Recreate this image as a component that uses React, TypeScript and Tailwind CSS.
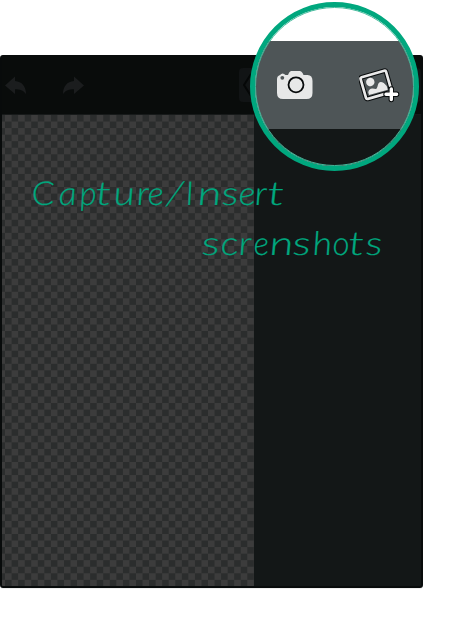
import React from "react";

function Arrow({ flip = false }: { flip?: boolean }) {
  return (
    <svg viewBox="0 0 22 20" className={flip ? "h-5 w-[22px] -scale-x-100" : "h-5 w-[22px]"}>
      <path d="M0 10.500 10 1.500v4.500c7 .5 11 5.500 11 13-3-4-6-4.800-11-4.800V19z" fill="#1b1d1e" />
    </svg>
  );
}

function Camera() {
  return (
    <svg viewBox="0 0 36 30" className="h-[30px] w-9">
      <path d="M3 5q2.500-3 5.500 0h2.500q1.500-4 3.500-4h8q2.500 0 4 4h4q5 0 5 6v12q0 6-6 6H6q-6 0-6-6V9q0-3 3-4z" fill="#e7e8e8" />
      <circle cx="5.300" cy="7.800" r="1.900" fill="#4e5557" />
      <circle cx="19" cy="14.800" r="7.500" fill="none" stroke="#080b0c" strokeWidth="1.800" />
    </svg>
  );
}

function InsertPicture() {
  return (
    <svg viewBox="0 0 42 35" className="h-[35px] w-[42px]">
      <g transform="rotate(-16 17.3 16.800)">
        <rect x="3.800" y="5.500" width="26.500" height="22.500" rx="1.500" fill="none" stroke="#080b0c" strokeWidth="4.800" />
        <rect x="3.800" y="5.500" width="26.500" height="22.500" rx="1.500" fill="none" stroke="#e9e9e9" strokeWidth="2.700" />
        <circle cx="12.300" cy="12.500" r="4.200" fill="#e9e9e9" />
        <path d="M7.500 24.700v-3q2.500-4.500 7-1.500 2 1.500 3.500-1.500 3-6 7-1.500l2 3.500v4z" fill="#e9e9e9" />
      </g>
      <path d="M32.300 21v10.600M27 26.300h10.600" stroke="#080b0c" strokeWidth="5.400" strokeLinecap="round" />
      <path d="M32.300 21v10.600M27 26.300h10.600" stroke="#fff" strokeWidth="3.400" strokeLinecap="round" />
    </svg>
  );
}

type Letter = { char: string; advance: number; stretch: number };

const firstLine: Letter[] = [
  { char: "C", advance: 27, stretch: 1.1 },
  { char: "a", advance: 21, stretch: 1.1 },
  { char: "p", advance: 16, stretch: 1.0 },
  { char: "t", advance: 18, stretch: 1.4 },
  { char: "u", advance: 23, stretch: 1.25 },
  { char: "r", advance: 11, stretch: 1.15 },
  { char: "e", advance: 18, stretch: 1.05 },
  { char: "/", advance: 20, stretch: 1.2 },
  { char: "I", advance: 12, stretch: 1 },
  { char: "n", advance: 24, stretch: 1.4 },
  { char: "s", advance: 17, stretch: 1.3 },
  { char: "e", advance: 16, stretch: 1.1 },
  { char: "r", advance: 13, stretch: 1.15 },
  { char: "t", advance: 16, stretch: 1.5 },
];

const secondLine: Letter[] = [
  { char: "s", advance: 19, stretch: 1.4 },
  { char: "c", advance: 18, stretch: 1.2 },
  { char: "r", advance: 15, stretch: 1.2 },
  { char: "e", advance: 16, stretch: 1 },
  { char: "n", advance: 23, stretch: 1.4 },
  { char: "s", advance: 20, stretch: 1.4 },
  { char: "h", advance: 20, stretch: 1.15 },
  { char: "o", advance: 16, stretch: 1 },
  { char: "t", advance: 17, stretch: 1.4 },
  { char: "s", advance: 16, stretch: 1.3 },
];

function Handwriting({ letters }: { letters: Letter[] }) {
  return (
    <>
      {letters.map(({ char, advance, stretch }, i) => (
        <span
          key={i}
          className="inline-block origin-[0_75%]"
          style={{ width: advance, transform: `skewX(${char === "/" ? -6 : 4}deg) scaleX(${stretch})` }}
        >
          {char}
        </span>
      ))}
    </>
  );
}

export default function App() {
  return (
    <main className="relative h-[627px] w-[455px] overflow-hidden bg-white pt-[55px]">
      <section className="flex h-[533px] w-[423px] flex-col overflow-hidden rounded-[3px] border-t border-r-2 border-b-2 border-l-2 border-[#080b0b] bg-[#131717] shadow-[0_1px_0_#eee]">
        <header className="flex h-[59px] shrink-0 items-center justify-between border-b border-[#171a1a] bg-[#090c0b] pl-[3px]">
          <div className="flex gap-[35px]">
            <Arrow />
            <Arrow flip />
          </div>
          <div className="flex h-[34px] w-[182px] items-center rounded bg-[#111415] pl-[3px]">
            <svg viewBox="0 0 10 24" className="h-6 w-2.5"><path d="M9 1 2 12l7 11" fill="none" stroke="#050707" strokeWidth="2" /></svg>
          </div>
        </header>
        <div className="w-[251.5px] grow bg-[repeating-conic-gradient(#3c3c3c_0_25%,#2b2d2d_0_50%)] bg-[length:13.1px_13.1px] bg-[position:-3.5px_0px]" />
      </section>
      <div className="absolute left-[32px] top-[170px] whitespace-nowrap font-['Lato',sans-serif] text-[33px] font-light italic leading-[44px] text-[#00a77e] [-webkit-text-stroke:0.2px_#00a77e]">
        <Handwriting letters={firstLine} />
      </div>
      <div className="absolute left-[202px] top-[220px] whitespace-nowrap font-['Lato',sans-serif] text-[33px] font-light italic leading-[44px] text-[#00a77e] [-webkit-text-stroke:0.2px_#00a77e]">
        <Handwriting letters={secondLine} />
      </div>
      <div className="absolute left-[250px] top-[2px] flex h-[169px] w-[169px] flex-col overflow-hidden rounded-full border-[5px] border-[#00a77e] bg-white">
        <div className="h-[34px] shrink-0" />
        <div className="flex h-[88px] shrink-0 items-center bg-[#4e5557] pl-[21.5px]">
          <Camera />
          <div className="ml-[46.5px]"><InsertPicture /></div>
        </div>
        <div className="grow bg-[#131717]" />
      </div>
      <div className="pointer-events-none absolute left-[255px] top-[7px] h-[159px] w-[159px] rounded-full border border-[#43b99b]" />
    </main>
  );
}
